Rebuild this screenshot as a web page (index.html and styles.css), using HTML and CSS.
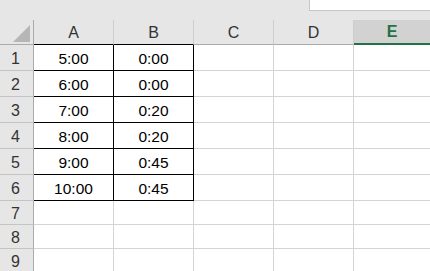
FILE: index.html
```html
<!DOCTYPE html>
<html lang="en">
<head>
    <meta charset="UTF-8">
    <title>Sheet1</title>
    <link rel="stylesheet" href="styles.css">
</head>
<body>
    <div class="topbar">
        <div class="namebox"></div>
    </div>

    <div class="sheet">
        <!-- column headers -->
        <div class="corner">
            <svg class="corner-mark" width="17" height="17" viewBox="0 0 17 17"><polygon points="17,0 17,17 0,17" fill="#b6b6b6"/></svg>
        </div>
        <div class="colhead data-top">A</div>
        <div class="colhead data-top">B</div>
        <div class="colhead">C</div>
        <div class="colhead">D</div>
        <div class="colhead active">E</div>

        <div class="rowhead">1</div>
        <div class="cell boxed">5:00</div>
        <div class="cell boxed">0:00</div>
        <div class="cell"></div><div class="cell"></div><div class="cell last"></div>

        <div class="rowhead">2</div>
        <div class="cell boxed">6:00</div>
        <div class="cell boxed">0:00</div>
        <div class="cell"></div><div class="cell"></div><div class="cell last"></div>

        <div class="rowhead">3</div>
        <div class="cell boxed">7:00</div>
        <div class="cell boxed">0:20</div>
        <div class="cell"></div><div class="cell"></div><div class="cell last"></div>

        <div class="rowhead">4</div>
        <div class="cell boxed">8:00</div>
        <div class="cell boxed">0:20</div>
        <div class="cell"></div><div class="cell"></div><div class="cell last"></div>

        <div class="rowhead">5</div>
        <div class="cell boxed">9:00</div>
        <div class="cell boxed">0:45</div>
        <div class="cell"></div><div class="cell"></div><div class="cell last"></div>

        <div class="rowhead">6</div>
        <div class="cell boxed">10:00</div>
        <div class="cell boxed">0:45</div>
        <div class="cell"></div><div class="cell"></div><div class="cell last"></div>

        <div class="rowhead">7</div>
        <div class="cell"></div><div class="cell"></div><div class="cell"></div><div class="cell"></div><div class="cell last"></div>

        <div class="rowhead">8</div>
        <div class="cell"></div><div class="cell"></div><div class="cell"></div><div class="cell"></div><div class="cell last"></div>

        <div class="rowhead">9</div>
        <div class="cell"></div><div class="cell"></div><div class="cell"></div><div class="cell"></div><div class="cell last"></div>
    </div>
</body>
</html>
```

FILE: styles.css
```css
* {
    margin: 0;
    padding: 0;
    box-sizing: border-box;
}

body {
    width: 430px;
    height: 271px;
    overflow: hidden;
    background: #ffffff;
    font-family: 'Liberation Sans', Arial, sans-serif;
    color: #000;
}

.topbar {
    height: 20px;
    background: #e6e6e6;
    display: flex;
    justify-content: flex-end;
}

.namebox {
    width: 121px;
    height: 11px;
    background: #ffffff;
    border-left: 1px solid #c6c6c6;
    border-bottom: 1px solid #c6c6c6;
}

.sheet {
    display: grid;
    grid-template-columns: 34px 80px 80px 80px 80px 76px;
    grid-template-rows: 25px repeat(6, 26px) repeat(3, 24px);
}

.corner {
    background: #e6e6e6;
    border-right: 1px solid #ababab;
    border-bottom: 1px solid #ababab;
    display: flex;
    justify-content: flex-end;
    align-items: flex-end;
    padding: 0 3px 2px 0;
}

.colhead {
    background: #e6e6e6;
    border-right: 1px solid #cdcdcd;
    border-bottom: 1px solid #ababab;
    display: flex;
    align-items: center;
    justify-content: center;
    font-size: 16px;
    color: #333;
    padding-top: 1px;
}

.colhead.data-top {
    border-bottom-color: #000;
}

.colhead.active {
    background: #d2d2d2;
    border-right: none;
    border-bottom: 2px solid #217346;
    color: #217346;
    font-weight: bold;
}

.rowhead {
    background: #e6e6e6;
    border-right: 1px solid #ababab;
    border-bottom: 1px solid #c4c4c4;
    display: flex;
    align-items: center;
    justify-content: center;
    font-size: 16px;
    color: #333;
    padding: 2px 2px 0 0;
}

.cell {
    border-right: 1px solid #d4d4d4;
    border-bottom: 1px solid #d4d4d4;
    display: flex;
    align-items: center;
    justify-content: center;
    font-size: 15.5px;
    padding-top: 2px;
}

.cell.last {
    border-right: none;
}

.cell.boxed {
    border-right-color: #000;
    border-bottom-color: #000;
}
```
